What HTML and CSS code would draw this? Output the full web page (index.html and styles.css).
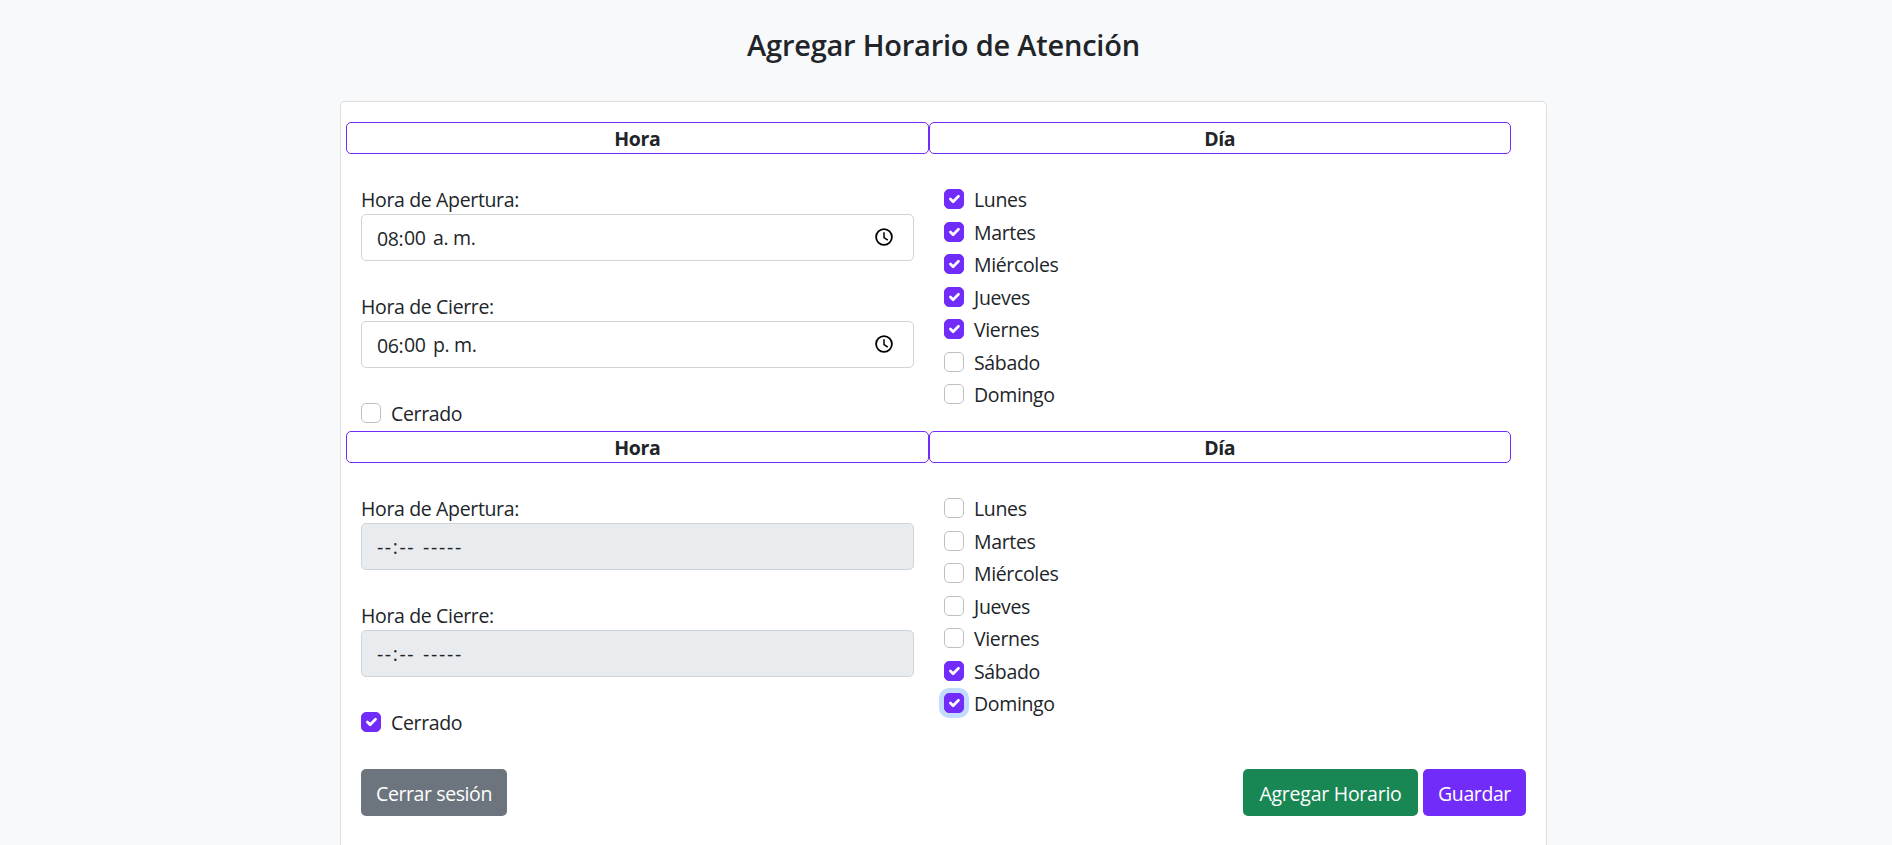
FILE: index.html
```
<!DOCTYPE html>
<html lang="es">
<head>
<meta charset="utf-8">
<title>Agregar Horario de Atención</title>
<link rel="stylesheet" href="styles.css">
</head>
<body>
<main class="page">
  <h1 class="title">Agregar Horario de Atención</h1>
  <form class="card">
    <section class="schedule">
      <div class="heads"><div class="head">Hora</div><div class="head">Día</div></div>
      <div class="cols">
        <div class="hours">
          <div class="field"><div class="label">Hora de Apertura:</div>
            <div class="input"><span class="hh">08:</span><span class="mm">00</span><span class="ampm">a. m.</span><svg class="clock"><use href="#clock"/></svg></div></div>
          <div class="field"><div class="label">Hora de Cierre:</div>
            <div class="input"><span class="hh">06:</span><span class="mm">00</span><span class="ampm">p. m.</span><svg class="clock"><use href="#clock"/></svg></div></div>
          <div class="check"><span class="box"></span><span>Cerrado</span></div>
        </div>
        <div class="days">
          <div class="check"><span class="box on"><svg><use href="#tick"/></svg></span><span>Lunes</span></div>
          <div class="check"><span class="box on"><svg><use href="#tick"/></svg></span><span>Martes</span></div>
          <div class="check"><span class="box on"><svg><use href="#tick"/></svg></span><span>Miércoles</span></div>
          <div class="check"><span class="box on"><svg><use href="#tick"/></svg></span><span>Jueves</span></div>
          <div class="check"><span class="box on"><svg><use href="#tick"/></svg></span><span>Viernes</span></div>
          <div class="check"><span class="box"></span><span>Sábado</span></div>
          <div class="check"><span class="box"></span><span>Domingo</span></div>
        </div>
      </div>
    </section>
    <section class="schedule">
      <div class="heads"><div class="head">Hora</div><div class="head">Día</div></div>
      <div class="cols">
        <div class="hours">
          <div class="field"><div class="label">Hora de Apertura:</div>
            <div class="input disabled"><span class="dash-time">--:--</span><span class="dash-ampm">-----</span></div></div>
          <div class="field"><div class="label">Hora de Cierre:</div>
            <div class="input disabled"><span class="dash-time">--:--</span><span class="dash-ampm">-----</span></div></div>
          <div class="check"><span class="box on"><svg><use href="#tick"/></svg></span><span>Cerrado</span></div>
        </div>
        <div class="days">
          <div class="check"><span class="box"></span><span>Lunes</span></div>
          <div class="check"><span class="box"></span><span>Martes</span></div>
          <div class="check"><span class="box"></span><span>Miércoles</span></div>
          <div class="check"><span class="box"></span><span>Jueves</span></div>
          <div class="check"><span class="box"></span><span>Viernes</span></div>
          <div class="check"><span class="box on"><svg><use href="#tick"/></svg></span><span>Sábado</span></div>
          <div class="check"><span class="box on focus"><svg><use href="#tick"/></svg></span><span>Domingo</span></div>
        </div>
      </div>
    </section>
    <div class="actions">
      <button type="button" class="btn gray">Cerrar sesión</button>
      <div class="right">
        <button type="button" class="btn green">Agregar Horario</button>
        <button type="button" class="btn purple">Guardar</button>
      </div>
    </div>
  </form>
</main>
<svg width="0" height="0" class="defs">
  <symbol id="tick" viewBox="0 0 20 20"><path fill="none" stroke="#fff" stroke-width="3" stroke-linecap="round" stroke-linejoin="round" d="m6 10 3 3 6-6"/></symbol>
  <symbol id="clock" viewBox="0 0 20 20"><circle cx="10" cy="10" r="7.9" fill="none" stroke="#000" stroke-width="1.8"/><path fill="none" stroke="#000" stroke-width="1.5" d="M10 5.2v5.4l3.8 2.6"/></symbol>
</svg>
</body>
</html>
```
FILE: styles.css
```
* { box-sizing: border-box; }
body {
  margin: 0;
  background: #f8f9fb;
  color: #212529;
  font: 19.5px/30px "Open Sans", "Noto Sans", sans-serif;
  letter-spacing: -0.35px;
}
.defs { display: block; }
.page { width: 1207px; height: 845px; margin-left: 340px; overflow: hidden; }
.title {
  margin: 0;
  padding-top: 26px;
  height: 101px;
  font-size: 29px;
  line-height: 37px;
  font-weight: 600;
  letter-spacing: -0.22px;
  text-align: center;
}
.card {
  height: 744px;
  padding: 20px 20px 0;
  background: #fff;
  border: 1px solid #dfdfdf;
  border-bottom: 0;
  border-radius: 5px 5px 0 0;
}
.schedule { height: 309px; }
.heads { display: flex; width: 1165px; margin-left: -15px; }
.head {
  width: 582.5px;
  height: 32px;
  border: 1px solid #712cf9;
  border-radius: 5px;
  font-weight: 700;
  line-height: 32px;
  text-align: center;
}
.cols { display: flex; padding-top: 30px; }
.hours { width: 553px; margin-right: 30px; }
.field { height: 107px; }
.label { line-height: 32px; height: 30px; }
.input {
  display: flex;
  align-items: center;
  height: 47px;
  padding: 0 19.5px 0 15px;
  border: 1px solid #ced4da;
  border-radius: 5px;
}
.disabled { background: #e9ecef; }
.hh { width: 27px; padding-top: 2px; }
.mm { width: 29px; }
.ampm { padding-top: 1px; }
.dash-time { width: 46px; letter-spacing: 1.6px; }
.dash-ampm { letter-spacing: 1.7px; }
.clock { width: 20px; height: 20px; margin: -1px 0 0 auto; }
.check { display: flex; gap: 10px; height: 32.5px; line-height: 32px; }
.box {
  flex: none;
  width: 20px;
  height: 20px;
  margin-top: 5px;
  border: 1px solid #bfbfbf;
  border-radius: 5px;
}
.on { background: #712cf9; border-color: #712cf9; }
.on svg { display: block; width: 18px; height: 18px; }
.focus { box-shadow: 0 0 0 5px #c2dbfe; }
.actions { display: flex; justify-content: space-between; padding-top: 29px; }
.right { display: flex; gap: 5px; }
.btn {
  height: 47px;
  padding: 2px 0 0;
  border: 0;
  border-radius: 5px;
  color: #fff;
  font: inherit;
  letter-spacing: -0.4px;
}
.gray { width: 146px; background: #6c757d; }
.green { width: 175px; background: #198754; letter-spacing: -0.25px; }
.purple { width: 103px; background: #712cf9; }
```
